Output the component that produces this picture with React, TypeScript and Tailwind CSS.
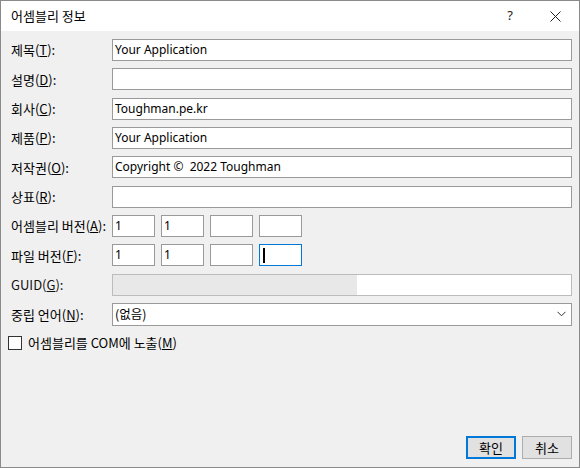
import React from "react";

const font = { fontFamily: '"Noto Sans CJK KR", "Noto Sans", sans-serif' };

function Label({ text, key_ }: { text: string; key_: string }) {
  return (
    <span className="whitespace-nowrap text-[13px] text-[#000]">
      {text}(<span className="underline">{key_}</span>):
    </span>
  );
}

function TextBox({ value }: { value?: string }) {
  return (
    <div className="flex h-[22px] flex-1 items-center whitespace-pre border border-[#9a9a9a] bg-white px-[2px] text-[12px] text-black" style={{ fontFamily: '"Noto Sans", "Noto Sans CJK KR", sans-serif' }}>
      {value}
    </div>
  );
}

function VerBox({ value, focused }: { value?: string; focused?: boolean }) {
  return (
    <div
      className={
        focused
          ? "flex h-[22px] w-[43px] items-center border border-[#0078d7] bg-white px-[2px] text-[12px]"
          : "flex h-[22px] w-[43px] items-center border border-[#9a9a9a] bg-white px-[2px] text-[12px]"
      }
      style={{ fontFamily: '"Noto Sans", sans-serif' }}
    >
      {focused ? <span className="ml-[1px] h-[15px] w-[2px] bg-black" /> : value}
    </div>
  );
}

export default function App() {
  const rows = [
    { label: "제목", key_: "T", value: "Your Application" },
    { label: "설명", key_: "D", value: "" },
    { label: "회사", key_: "C", value: "Toughman.pe.kr" },
    { label: "제품", key_: "P", value: "Your Application" },
    { label: "저작권", key_: "O", value: "Copyright ©  2022 Toughman" },
    { label: "상표", key_: "R", value: "" },
  ];

  return (
    <div className="flex h-[468px] w-[580px] flex-col border border-[#8a8a8a] bg-[#f0f0f0]" style={font}>
      <div className="flex h-[30px] shrink-0 items-center bg-white pl-[10px]">
        <span className="text-[13px] text-black">어셈블리 정보</span>
        <span className="ml-auto mr-[37px] text-[13px] text-[#222]" style={{ fontFamily: '"Noto Sans", sans-serif' }}>?</span>
        <svg width="11" height="11" viewBox="0 0 11 11" className="mr-[18px]">
          <path d="M0.5 0.5 L10.5 10.5 M10.5 0.5 L0.5 10.5" stroke="#222" strokeWidth="1" />
        </svg>
      </div>

      <div className="flex flex-1 flex-col pl-[10px] pr-[7px] pt-[8px]">
        <div className="grid grid-cols-[101px_1fr] items-center gap-y-[7.33px]">
          {rows.map((r) => (
            <React.Fragment key={r.label}>
              <Label text={r.label} key_={r.key_} />
              <TextBox value={r.value} />
            </React.Fragment>
          ))}

          <Label text="어셈블리 버전" key_="A" />
          <div className="flex gap-[6px]">
            <VerBox value="1" />
            <VerBox value="1" />
            <VerBox />
            <VerBox />
          </div>

          <Label text="파일 버전" key_="F" />
          <div className="flex gap-[6px]">
            <VerBox value="1" />
            <VerBox value="1" />
            <VerBox />
            <VerBox focused />
          </div>

          <span className="text-[13px] text-[#111]">
            GUID(<span className="underline">G</span>):
          </span>
          <div className="flex h-[22px] border border-[#bcbcbc] bg-white">
            <div className="h-full w-[244px] bg-[#e8e8e8]" />
          </div>

          <Label text="중립 언어" key_="N" />
          <div className="flex h-[23px] items-center border border-[#9a9a9a] bg-white px-[2px] text-[12.5px]">
            <span>(없음)</span>
            <svg width="9" height="6" viewBox="0 0 9 6" className="ml-auto mr-[3px]">
              <path d="M0.5 0.8 L4.5 4.8 L8.5 0.8" fill="none" stroke="#333" strokeWidth="1" />
            </svg>
          </div>
        </div>

        <div className="mt-[7px] flex items-center gap-[6px]">
          <div className="-ml-[3px] h-[14px] w-[14px] border border-[#333] bg-white" />
          <span className="text-[13px] text-black">
            어셈블리를 COM에 노출(<span className="underline">M</span>)
          </span>
        </div>

        <div className="mt-auto mb-[8px] flex justify-end gap-[6px]">
          <button className="h-[23px] w-[50px] border-2 border-[#0078d7] bg-[#e1e1e1] text-[13px] text-black">확인</button>
          <button className="h-[23px] w-[50px] border border-[#adadad] bg-[#e1e1e1] text-[13px] text-black">취소</button>
        </div>
      </div>
    </div>
  );
}
